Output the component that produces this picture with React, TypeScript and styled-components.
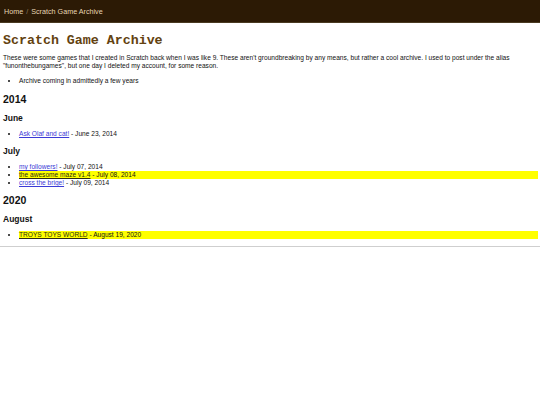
import React from 'react';
import styled, { createGlobalStyle } from 'styled-components';

const GlobalStyle = createGlobalStyle`
  html, body {
    margin: 0;
    padding: 0;
    background: #ffffff;
  }
  body {
    font-family: 'Liberation Sans', Arial, sans-serif;
    font-size: 6.6px;
    color: #111111;
  }
`;

const TopBar = styled.nav`
  height: 23px;
  background: #2c1a05;
  display: flex;
  align-items: center;
  padding: 0 4px;
  font-size: 7.2px;
  color: #e6d6b4;
  border-bottom: 1px solid #4a3a22;
  box-sizing: border-box;
`;

const Crumb = styled.a`
  color: #e6d6b4;
  text-decoration: none;
`;

const Slash = styled.span`
  color: #8a7a60;
  margin: 0 3px;
`;

const Main = styled.main`
  padding: 0 3px;
`;

const Title = styled.h1`
  font-family: 'Liberation Mono', 'Courier New', monospace;
  font-weight: bold;
  font-size: 13.3px;
  line-height: 15px;
  color: #634210;
  margin: 10px 0 6px;
`;

const Intro = styled.p`
  margin: 6px 0;
  line-height: 8px;
`;

const Year = styled.h2`
  font-size: 10.5px;
  line-height: 12px;
  font-weight: bold;
  margin: 7px 0 8px;
`;

const Month = styled.h3`
  font-size: 8.5px;
  line-height: 10px;
  font-weight: bold;
  margin: 8px 0 7px;
`;

const List = styled.ul<{ $after?: number }>`
  margin: 7px 0 ${(p) => p.$after ?? 7}px;
  padding-left: 16px;
`;

const Item = styled.li<{ $hot?: boolean }>`
  line-height: 8px;
  background: ${(p) => (p.$hot ? '#ffff00' : 'transparent')};
  margin-right: -1px;
`;

const GameLink = styled.a<{ $hot?: boolean }>`
  color: ${(p) => (p.$hot ? '#2a2a10' : '#3b3bd6')};
  text-decoration: underline;
`;

const Rule = styled.hr`
  border: none;
  border-top: 1px solid #cfcfcf;
  margin: 7px 0 0;
`;

type Game = { name: string; date: string; hot?: boolean };

const sections: Array<{ year: string; months: Array<{ month: string; games: Game[] }> }> = [
  {
    year: '2014',
    months: [
      { month: 'June', games: [{ name: 'Ask Olaf and cat!', date: 'June 23, 2014' }] },
      {
        month: 'July',
        games: [
          { name: 'my followers!', date: 'July 07, 2014' },
          { name: 'the awesome maze v1.4', date: 'July 08, 2014', hot: true },
          { name: 'cross the brige!', date: 'July 09, 2014' },
        ],
      },
    ],
  },
  {
    year: '2020',
    months: [
      {
        month: 'August',
        games: [{ name: 'TROYS TOYS WORLD', date: 'August 19, 2020', hot: true }],
      },
    ],
  },
];

export default function App() {
  return (
    <>
      <GlobalStyle />
      <TopBar>
        <Crumb href="#">Home</Crumb>
        <Slash>/</Slash>
        <Crumb href="#">Scratch Game Archive</Crumb>
      </TopBar>
      <Main>
        <Title>Scratch Game Archive</Title>
        <Intro>
          These were some games that I created in Scratch back when I was like 9. These aren't
          groundbreaking by any means, but rather a cool archive. I used to post under the alias
          "funonthebungames", but one day I deleted my account, for some reason.
        </Intro>
        <List $after={8}>
          <Item>Archive coming in admittedly a few years</Item>
        </List>
        {sections.map((s) => (
          <section key={s.year}>
            <Year>{s.year}</Year>
            {s.months.map((m) => (
              <div key={m.month}>
                <Month>{m.month}</Month>
                <List>
                  {m.games.map((g) => (
                    <Item key={g.name} $hot={g.hot}>
                      <GameLink href="#" $hot={g.hot}>
                        {g.name}
                      </GameLink>{' '}
                      - {g.date}
                    </Item>
                  ))}
                </List>
              </div>
            ))}
          </section>
        ))}
      </Main>
      <Rule />
    </>
  );
}
